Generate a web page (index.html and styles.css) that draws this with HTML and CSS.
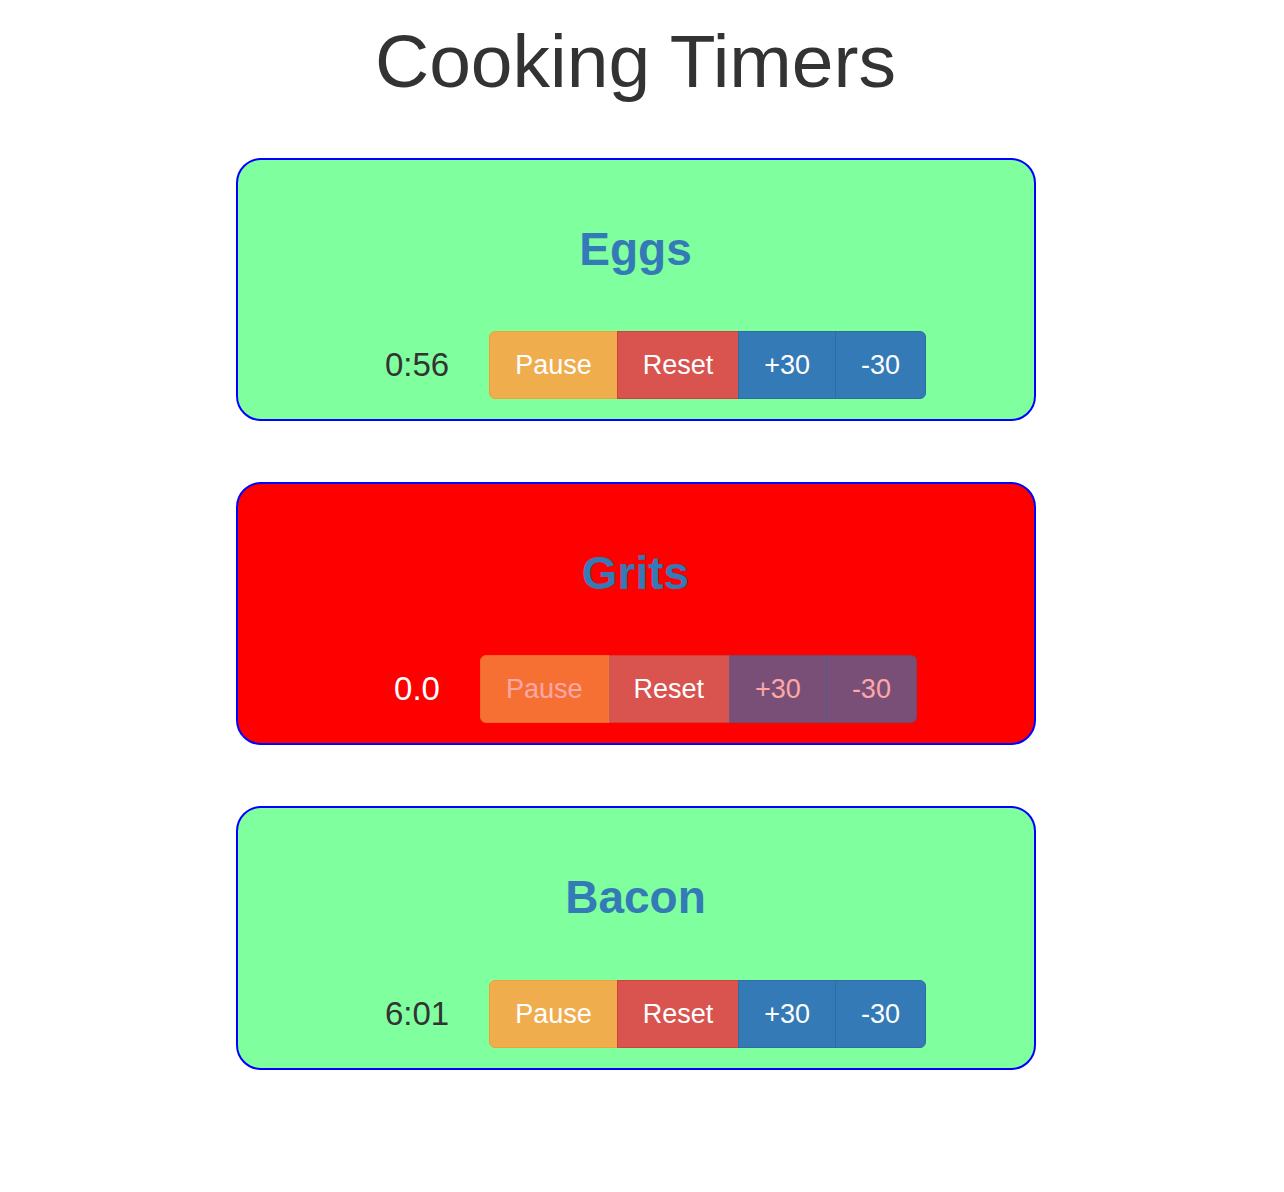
FILE: index.html
```html
<!DOCTYPE html>
<html lang="en">
<head>
    <meta charset="UTF-8">
    <title>Cooking Timers</title>
    <link rel="stylesheet" href="styles.css">
</head>
<body>
    <h1 class="page-title">Cooking Timers</h1>

    <div class="timers">
        <!-- Eggs -->
        <div class="timer-card">
            <h2 class="timer-name">Eggs</h2>
            <div class="timer-row">
                <span class="timer-time">0:56</span>
                <div class="btn-group">
                    <button class="btn btn-warning">Pause</button>
                    <button class="btn btn-danger">Reset</button>
                    <button class="btn btn-primary">+30</button>
                    <button class="btn btn-primary">-30</button>
                </div>
            </div>
        </div>

        <!-- Grits (finished) -->
        <div class="timer-card done">
            <h2 class="timer-name">Grits</h2>
            <div class="timer-row">
                <span class="timer-time">0.0</span>
                <div class="btn-group">
                    <button class="btn btn-warning" disabled>Pause</button>
                    <button class="btn btn-danger">Reset</button>
                    <button class="btn btn-primary" disabled>+30</button>
                    <button class="btn btn-primary" disabled>-30</button>
                </div>
            </div>
        </div>

        <!-- Bacon -->
        <div class="timer-card">
            <h2 class="timer-name">Bacon</h2>
            <div class="timer-row">
                <span class="timer-time">6:01</span>
                <div class="btn-group">
                    <button class="btn btn-warning">Pause</button>
                    <button class="btn btn-danger">Reset</button>
                    <button class="btn btn-primary">+30</button>
                    <button class="btn btn-primary">-30</button>
                </div>
            </div>
        </div>
    </div>
</body>
</html>
```

FILE: styles.css
```css
* {
    margin: 0;
    padding: 0;
    box-sizing: border-box;
}

body {
    font-family: "Liberation Sans", Arial, Helvetica, sans-serif;
    background: #fff;
    color: #333;
    padding-right: 13px;
}

.page-title {
    font-size: 75px;
    font-weight: normal;
    line-height: 1.1;
    text-align: center;
    margin-top: 20px;
    color: #333;
}

.timers {
    display: flex;
    flex-direction: column;
    align-items: center;
    gap: 61px;
    margin-top: 55px;
}

.timer-card {
    width: 800px;
    background: #80ff9f;
    border: 2px solid #0000ff;
    border-radius: 25px;
    padding: 64px 0 20px;
    text-align: center;
}

.timer-card.done {
    background: #ff0000;
}

.timer-name {
    font-size: 46px;
    font-weight: bold;
    line-height: 1.1;
    color: #337ab7;
    margin-bottom: 57px;
}

.timer-row {
    display: flex;
    justify-content: center;
    align-items: center;
}

.timer-time {
    font-size: 33px;
    padding: 0 40px;
    color: #333;
}

.done .timer-time {
    color: #fff;
}

.btn-group {
    display: flex;
}

.btn {
    font-family: inherit;
    font-size: 27px;
    line-height: 1.4;
    padding: 15px 25px 13px;
    color: #fff;
    border: 1px solid transparent;
    border-radius: 0;
    cursor: pointer;
}

.btn + .btn {
    margin-left: -1px;
}

.btn:first-child {
    border-radius: 6px 0 0 6px;
}

.btn:last-child {
    border-radius: 0 6px 6px 0;
}

.btn:disabled {
    opacity: 0.65;
    cursor: not-allowed;
}

.btn-warning {
    background: #f0ad4e;
    border-color: #eea236;
}

.btn-danger {
    background: #d9534f;
    border-color: #d43f3a;
}

.btn-primary {
    background: #337ab7;
    border-color: #2e6da4;
}
```
